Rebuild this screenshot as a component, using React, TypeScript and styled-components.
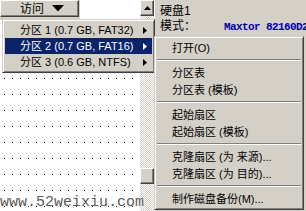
import React from 'react';
import styled, { createGlobalStyle } from 'styled-components';

const Global = createGlobalStyle`
  html, body { margin: 0; padding: 0; background: #d4d0c8; }
  body {
    width: 306px; height: 211px; overflow: hidden;
    font-family: "Liberation Sans", "Noto Sans CJK SC", sans-serif;
    font-size: 12px; color: #000;
  }
`;

const Screen = styled.div`
  position: relative;
  width: 306px;
  height: 211px;
  overflow: hidden;
  display: flex;
  background: #d4d0c8;
`;

const LeftPane = styled.div`
  width: 154px;
  display: flex;
`;

const ListArea = styled.div`
  width: 140px;
  display: flex;
  flex-direction: column;
`;

const Toolbar = styled.div`
  height: 20px;
  display: flex;
`;

const ButtonCell = styled.div`
  width: 80px;
  background: #d4d0c8;
`;

const ToolbarBlank = styled.div`
  flex: 1;
  background: #fff;
`;

const Raised = styled.div`
  background: #d4d0c8;
  border-top: 1px solid #fff;
  border-left: 1px solid #fff;
  border-right: 1px solid #404040;
  border-bottom: 1px solid #404040;
  box-shadow: inset -1px -1px 0 #808080;
  box-sizing: border-box;
`;

const DropButton = styled(Raised)`
  width: 79px;
  height: 17px;
  display: flex;
  align-items: center;
  padding-left: 19px;
  gap: 8px;
  line-height: 12px;
`;

const DotList = styled.div`
  flex: 1;
  background-color: #fff;
  background-image: conic-gradient(at 1px 1px, transparent 75%, #000 0);
  background-size: 8px 16px;
  background-position: 4px 10px;
`;

const Scrollbar = styled.div`
  width: 14px;
  display: flex;
  flex-direction: column;
`;

const ScrollButton = styled(Raised)`
  height: 16px;
  display: flex;
  align-items: center;
  justify-content: center;
`;

const Track = styled.div`
  flex: 1;
  background-color: #fff;
  background-image: conic-gradient(#d4d0c8 25%, #fff 0 50%, #d4d0c8 0 75%, #fff 0);
  background-size: 2px 2px;
  display: flex;
  flex-direction: column;
`;

const Thumb = styled(Raised)`
  height: 16px;
  margin-top: 152px;
`;

const RightPane = styled.div`
  flex: 1;
  border-left: 1px solid #fff;
  padding: 5px 0 0 5px;
  display: flex;
  flex-direction: column;
  gap: 3px;
  white-space: nowrap;
  overflow: hidden;
`;

const InfoRow = styled.div`
  display: flex;
  align-items: baseline;
  height: 12px;
  line-height: 12px;
`;

const InfoLabel = styled.span`
  width: 64px;
  flex: none;
`;

const ModelValue = styled.span`
  font-family: "Liberation Mono", monospace;
  font-size: 11px;
  font-weight: bold;
  letter-spacing: -0.6px;
  color: #0000a8;
`;

const Menu = styled.div<{ $left: number; $top: number; $width: number }>`
  position: absolute;
  left: ${p => p.$left}px;
  top: ${p => p.$top}px;
  width: ${p => p.$width}px;
  box-sizing: border-box;
  background: #d4d0c8;
  border-top: 1px solid #d4d0c8;
  border-left: 1px solid #d4d0c8;
  border-right: 1px solid #404040;
  border-bottom: 1px solid #404040;
  box-shadow: inset 1px 1px 0 #fff, inset -1px -1px 0 #808080;
  padding: 2px;
  display: flex;
  flex-direction: column;
  white-space: nowrap;
  font-size: 11px;
`;

const MenuItem = styled.div<{ $active?: boolean; $h: number }>`
  height: ${p => p.$h}px;
  display: flex;
  align-items: center;
  padding-left: 15px;
  padding-right: 5px;
  background: ${p => (p.$active ? '#0a246a' : 'transparent')};
  color: ${p => (p.$active ? '#fff' : '#000')};
  line-height: 12px;
`;

const ItemLabel = styled.span`
  flex: 1;
`;

const Separator = styled.div`
  height: 8px;
  display: flex;
  align-items: center;
  &::before {
    content: '';
    flex: 1;
    border-top: 1px solid #808080;
    border-bottom: 1px solid #fff;
    box-sizing: border-box;
    height: 2px;
  }
`;

const Watermark = styled.div`
  position: absolute;
  left: 0;
  top: 195px;
  font-family: "Liberation Mono", monospace;
  font-size: 15px;
  line-height: 15px;
  color: #5a5a5a;
  text-shadow: 0 0 1px #fff;
`;

const Triangle = ({ dir, color = '#000' }: { dir: 'down' | 'up' | 'right'; color?: string }) => {
  if (dir === 'down')
    return (
      <svg width="12" height="7" viewBox="0 0 12 7">
        <polygon points="0,0 12,0 6,6.5" fill={color} />
      </svg>
    );
  if (dir === 'up')
    return (
      <svg width="7" height="4" viewBox="0 0 7 4">
        <polygon points="0,4 7,4 3.5,0" fill={color} />
      </svg>
    );
  return (
    <svg width="4" height="7" viewBox="0 0 4 7">
      <polygon points="0,0 4,3.5 0,7" fill={color} />
    </svg>
  );
};

const partitions = [
  { label: '分区 1 (0.7 GB, FAT32)' },
  { label: '分区 2 (0.7 GB, FAT16)', active: true },
  { label: '分区 3 (0.6 GB, NTFS)' },
];

const contextMenu: (string | null)[] = [
  '打开(O)',
  null,
  '分区表',
  '分区表 (模板)',
  null,
  '起始扇区',
  '起始扇区 (模板)',
  null,
  '克隆扇区 (为 来源)...',
  '克隆扇区 (为 目的)...',
  null,
  '制作磁盘备份(M)...',
];

export default function App() {
  return (
    <>
      <Global />
      <Screen>
        <LeftPane>
          <ListArea>
            <Toolbar>
              <ButtonCell>
                <DropButton>
                  <span>访问</span>
                  <Triangle dir="down" />
                </DropButton>
              </ButtonCell>
              <ToolbarBlank />
            </Toolbar>
            <DotList />
          </ListArea>
          <Scrollbar>
            <ScrollButton>
              <Triangle dir="up" />
            </ScrollButton>
            <Track>
              <Thumb />
            </Track>
          </Scrollbar>
        </LeftPane>
        <RightPane>
          <InfoRow>硬盘1</InfoRow>
          <InfoRow>
            <InfoLabel>模式：</InfoLabel>
            <ModelValue>Maxtor 82160D2</ModelValue>
          </InfoRow>
        </RightPane>

        <Menu $left={2} $top={19} $width={153}>
          {partitions.map(p => (
            <MenuItem key={p.label} $active={p.active} $h={16}>
              <ItemLabel>{p.label}</ItemLabel>
              <Triangle dir="right" color={p.active ? '#fff' : '#000'} />
            </MenuItem>
          ))}
        </Menu>

        <Menu $left={154} $top={36} $width={150}>
          {contextMenu.map((item, i) =>
            item === null ? (
              <Separator key={i} />
            ) : (
              <MenuItem key={i} $h={17}>
                <ItemLabel>{item}</ItemLabel>
              </MenuItem>
            )
          )}
        </Menu>

        <Watermark>www.52weixiu.com</Watermark>
      </Screen>
    </>
  );
}
